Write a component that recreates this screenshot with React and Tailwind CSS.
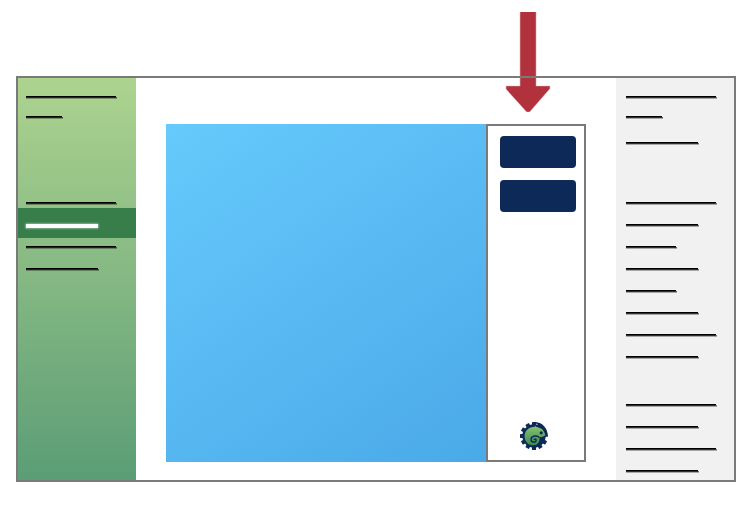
function Line({ className = "" }) {
  return (
    <div className={`h-[3px] shrink-0 ${className}`}>
      <div className="h-px bg-black" />
      <div className="-mr-px h-px bg-linear-to-r from-black/80 from-98% to-black/40" />
      <div className="-mr-px h-px bg-black/30" />
    </div>
  );
}

function Arrow() {
  return (
    <svg className="absolute left-[504px] top-3" width="48" height="100" viewBox="-2 0 48 100">
      <path
        d="M14.3 0H29.8V74.3H43.7V76.5L23.5 99.7H20.8L0.3 77V74.3H14.3Z"
        fill="#b1313c"
        stroke="#b1313c"
        strokeOpacity="0.35"
        strokeWidth="1.2"
      />
    </svg>
  );
}

const TEETH = [0, 30, 180, 210, 240, 270, 300, 330, 150, 120];

function Logo() {
  return (
    <svg width="30" height="30" viewBox="-15 -15 30 30">
      {TEETH.map((a) => (
        <rect key={a} x="-2" y="-14" width="4" height="5" rx="0.5" fill="#0c2957" transform={`rotate(${a})`} />
      ))}
      <circle r="11.7" fill="#0c2957" />
      <path d="M0 -14C8 -14 14 -8 14 0.8H7V-9Z" fill="#0c2957" />
      <defs>
        <linearGradient id="skin" x1="0" y1="0" x2="0" y2="1">
          <stop offset="0" stopColor="#8cc471" />
          <stop offset="1" stopColor="#3b8a50" />
        </linearGradient>
      </defs>
      <path
        d="M1 -10.2Q2 -9 4.3 -8.6C8.4 -7.8 10.6 -4.4 11.4 -0.8Q9 1.2 5.4 1.2C6.2 6 3.3 9.2 -0.5 9.2C-5.8 9.2 -9.4 5.6 -9.4 0.4C-9.4 -5.3 -5 -9 1 -9.2Z"
        fill="url(#skin)"
      />
      <path d="M5.2 1.6C4 -0.8 -2.6 -0.8 -3 3.2C-3.2 6.8 2.3 6.9 2.2 4.1C2.1 2.6 0 2.7 0.1 3.9" fill="none" stroke="#0c2957" strokeWidth="1.4" />
      <circle cx="7.2" cy="-3.2" r="1.6" fill="#0c2957" />
    </svg>
  );
}

export default function App() {
  return (
    <div className="relative h-[506px] w-[756px] overflow-hidden bg-white px-4 pt-[76px]">
      <Arrow />
      <main className="relative flex h-[406px] w-[720px] border-2 border-[#7a7a7a]">
        <aside className="flex w-[118px] shrink-0 flex-col bg-linear-to-b from-[#add38f] to-[#5b9d76]">
          <Line className="ml-2 mt-[18px] w-[90px]" />
          <Line className="ml-2 mt-[17px] w-9" />
          <Line className="ml-2 mt-[83px] w-[90px]" />
          <div className="mt-[3px] flex h-[30px] shrink-0 bg-[#377e4b] pl-2 pt-4">
            <div className="h-1 w-[72px] bg-white shadow-[0_0_2px_0.5px_#ffffff90]" />
          </div>
          <Line className="ml-2 mt-2 w-[90px]" />
          <Line className="ml-2 mt-[19px] w-[72px]" />
        </aside>
        <section className="flex flex-1 px-[30px] pb-[18px] pt-[46px]">
          <div className="w-80 bg-linear-145 from-[#66cafc] to-[#4aa9e8]" />
          <div className="flex w-[100px] flex-col border-2 border-[#7a7a7a] bg-white">
            <div className="ml-3 mt-2.5 h-8 w-[76px] rounded bg-[#0c2957]" />
            <div className="ml-3 mt-3 h-8 w-[76px] rounded bg-[#0c2957]" />
            <div className="mb-[9px] ml-[31px] mt-auto">
              <Logo />
            </div>
          </div>
        </section>
        <aside className="flex w-[118px] shrink-0 flex-col bg-[#f1f1f1] pl-2.5 pt-[18px]">
          <Line className="w-[90px]" />
          <Line className="mt-[17px] w-9" />
          <Line className="mt-[23px] w-[72px]" />
          <Line className="mt-[57px] w-[90px]" />
          <Line className="mt-[19px] w-[72px]" />
          <Line className="mt-[19px] w-[50px]" />
          <Line className="mt-[19px] w-[72px]" />
          <Line className="mt-[19px] w-[50px]" />
          <Line className="mt-[19px] w-[72px]" />
          <Line className="mt-[19px] w-[90px]" />
          <Line className="mt-[19px] w-[72px]" />
          <Line className="mt-[45px] w-[90px]" />
          <Line className="mt-[19px] w-[72px]" />
          <Line className="mt-[19px] w-[90px]" />
          <Line className="mt-[19px] w-[72px]" />
        </aside>
      </main>
    </div>
  );
}
